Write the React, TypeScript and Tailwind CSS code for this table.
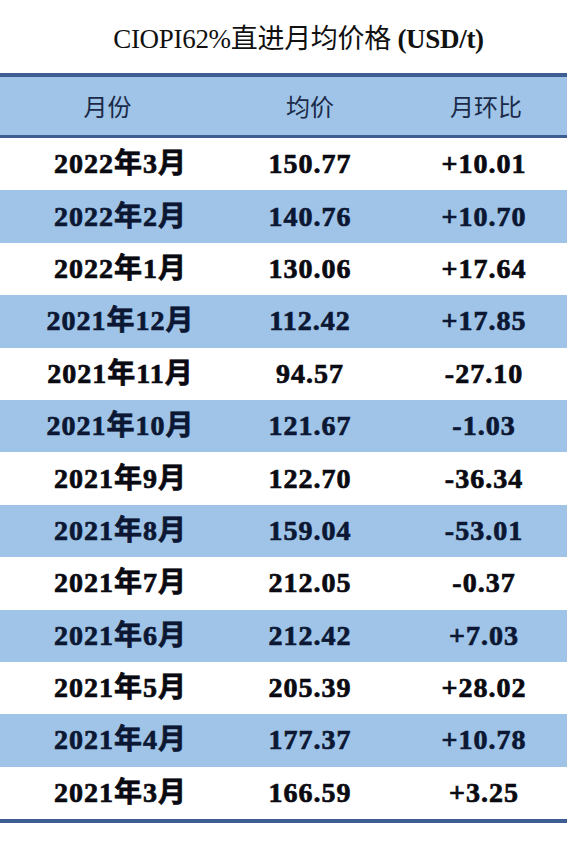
import React from "react";

const rows: [string, string, string][] = [
  ["2022年3月", "150.77", "+10.01"],
  ["2022年2月", "140.76", "+10.70"],
  ["2022年1月", "130.06", "+17.64"],
  ["2021年12月", "112.42", "+17.85"],
  ["2021年11月", "94.57", "-27.10"],
  ["2021年10月", "121.67", "-1.03"],
  ["2021年9月", "122.70", "-36.34"],
  ["2021年8月", "159.04", "-53.01"],
  ["2021年7月", "212.05", "-0.37"],
  ["2021年6月", "212.42", "+7.03"],
  ["2021年5月", "205.39", "+28.02"],
  ["2021年4月", "177.37", "+10.78"],
  ["2021年3月", "166.59", "+3.25"],
];

export default function App() {
  return (
    <div className="w-[567px] h-[863px] bg-white flex flex-col">
      <div className="h-[73px] flex items-center justify-center pl-[30px] pt-[6px] text-[27px] text-[#111] [font-family:'Liberation_Serif','Noto_Sans_CJK_SC',serif]">
        <span className="tracking-[-0.3px]">
          CIOPI62%直进月均价格 <span className="font-bold">(USD/t)</span>
        </span>
      </div>
      <div className="h-[4px] bg-[#3d5d93]" />
      <div className="h-[58px] bg-[#9fc4e7] grid grid-cols-[215px_190px_162px] items-center text-[24px] text-[#1b2a48] [font-family:'Noto_Sans_CJK_SC',sans-serif]">
        <div className="text-center">月份</div>
        <div className="text-center">均价</div>
        <div className="text-center">月环比</div>
      </div>
      <div className="h-[3px] bg-[#3d5d93]" />
      <div className="flex flex-col">
        {rows.map((r, i) => {
          const blue = i % 2 === 1;
          return (
            <div
              key={i}
              className={
                "h-[52.4px] grid grid-cols-[215px_190px_162px] items-center font-bold text-[28px] tracking-[1px] [-webkit-text-stroke:0.7px_currentColor] [font-family:'Liberation_Serif','Noto_Sans_CJK_SC',serif] " +
                (blue ? "bg-[#9fc4e7] text-[#0b1733]" : "bg-white text-[#0a0a12]")
              }
            >
              <div className="text-center pl-[26px]">{r[0]}</div>
              <div className="text-center">{r[1]}</div>
              <div className="text-center pr-[4px]">{r[2]}</div>
            </div>
          );
        })}
      </div>
      <div className="h-[4px] bg-[#3d5d93]" />
    </div>
  );
}
